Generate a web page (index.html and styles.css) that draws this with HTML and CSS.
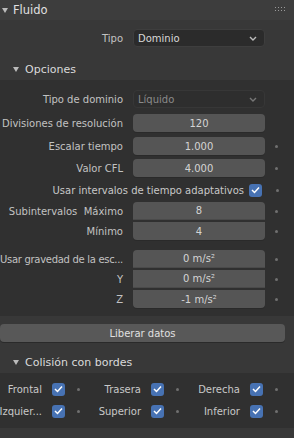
FILE: index.html
```html
<!DOCTYPE html>
<html>
<head>
<meta charset="utf-8">
<link rel="stylesheet" href="styles.css">
</head>
<body>
<div class="panel">
  <div class="phead">
    <span class="tri"></span><span class="ptitle">Fluido</span>
    <span class="grip"><i></i><i></i><i></i><i></i><i></i><i></i><i></i><i></i></span>
  </div>
  <div class="pbody">
    <div class="row r-tipo">
      <span class="lbl">Tipo</span>
      <div class="fld drop"><span>Dominio</span><svg class="chev" width="8" height="5" viewBox="0 0 8 5"><path d="M1 1 L4 4 L7 1" fill="none" stroke="#bdbdbd" stroke-width="1.4"/></svg></div>
      <span class="nodot"></span>
    </div>

    <div class="sub">
      <div class="shead"><span class="tri small"></span><span class="stitle">Opciones</span></div>
      <div class="sbody">
        <div class="row r-dom">
          <span class="lbl">Tipo de dominio</span>
          <div class="fld drop dis"><span>Líquido</span><svg class="chev" width="8" height="5" viewBox="0 0 8 5"><path d="M1 1 L4 4 L7 1" fill="none" stroke="#777" stroke-width="1.4"/></svg></div>
          <span class="nodot"></span>
        </div>
        <div class="row r-div">
          <span class="lbl">Divisiones de resolución</span>
          <div class="fld num">120</div>
          <span class="nodot"></span>
        </div>
        <div class="row r-esc">
          <span class="lbl">Escalar tiempo</span>
          <div class="fld num">1.000</div>
          <span class="dot"></span>
        </div>
        <div class="row r-cfl">
          <span class="lbl">Valor CFL</span>
          <div class="fld num">4.000</div>
          <span class="dot"></span>
        </div>
        <div class="row r-usar">
          <span class="chklbl">Usar intervalos de tiempo adaptativos</span>
          <span class="chk"><svg width="9" height="8" viewBox="0 0 9 8"><path d="M1 4 L3.5 6.5 L8 1.5" fill="none" stroke="#fff" stroke-width="1.5"/></svg></span>
          <span class="dot"></span>
        </div>
        <div class="row r-max">
          <span class="lbl">Subintervalos&nbsp; Máximo</span>
          <div class="fld num top">8</div>
          <span class="dot"></span>
        </div>
        <div class="row r-min">
          <span class="lbl">Mínimo</span>
          <div class="fld num bot">4</div>
          <span class="dot"></span>
        </div>
        <div class="row r-grav">
          <span class="lbl lbl-cut">Usar gravedad de la esc...</span>
          <div class="fld num top">0 m/s²</div>
          <span class="dot"></span>
        </div>
        <div class="row r-y">
          <span class="lbl">Y</span>
          <div class="fld num mid">0 m/s²</div>
          <span class="dot"></span>
        </div>
        <div class="row r-z">
          <span class="lbl">Z</span>
          <div class="fld num bot">-1 m/s²</div>
          <span class="dot"></span>
        </div>
      </div>
    </div>

    <div class="btn">Liberar datos</div>

    <div class="sub sub2">
      <div class="shead"><span class="tri small"></span><span class="stitle">Colisión con bordes</span></div>
      <div class="sbody sbody2">
        <div class="crow">
          <div class="cell"><span class="clbl">Frontal</span><span class="chk"><svg width="9" height="8" viewBox="0 0 9 8"><path d="M1 4 L3.5 6.5 L8 1.5" fill="none" stroke="#fff" stroke-width="1.5"/></svg></span><span class="dot"></span></div>
          <div class="cell"><span class="clbl">Trasera</span><span class="chk"><svg width="9" height="8" viewBox="0 0 9 8"><path d="M1 4 L3.5 6.5 L8 1.5" fill="none" stroke="#fff" stroke-width="1.5"/></svg></span><span class="dot"></span></div>
          <div class="cell"><span class="clbl">Derecha</span><span class="chk"><svg width="9" height="8" viewBox="0 0 9 8"><path d="M1 4 L3.5 6.5 L8 1.5" fill="none" stroke="#fff" stroke-width="1.5"/></svg></span><span class="dot"></span></div>
        </div>
        <div class="crow">
          <div class="cell"><span class="clbl">Izquier...</span><span class="chk"><svg width="9" height="8" viewBox="0 0 9 8"><path d="M1 4 L3.5 6.5 L8 1.5" fill="none" stroke="#fff" stroke-width="1.5"/></svg></span><span class="dot"></span></div>
          <div class="cell"><span class="clbl">Superior</span><span class="chk"><svg width="9" height="8" viewBox="0 0 9 8"><path d="M1 4 L3.5 6.5 L8 1.5" fill="none" stroke="#fff" stroke-width="1.5"/></svg></span><span class="dot"></span></div>
          <div class="cell"><span class="clbl">Inferior</span><span class="chk"><svg width="9" height="8" viewBox="0 0 9 8"><path d="M1 4 L3.5 6.5 L8 1.5" fill="none" stroke="#fff" stroke-width="1.5"/></svg></span><span class="dot"></span></div>
        </div>
      </div>
    </div>
  </div>
  <div class="nexthead"><span class="chk peek"><svg width="9" height="8" viewBox="0 0 9 8"><path d="M1 4 L3.5 6.5 L8 1.5" fill="none" stroke="#fff" stroke-width="1.5"/></svg></span></div>
</div>
</body>
</html>
```
FILE: styles.css
```css
* { box-sizing: border-box; }
html, body {
  margin: 0;
  padding: 0;
  background: #303030;
  width: 294px;
  height: 438px;
  overflow: hidden;
}
body {
  font-family: "DejaVu Sans", sans-serif;
  font-size: 10px;
  color: #c8c8c8;
}
.panel { display: flex; flex-direction: column; }
.phead {
  height: 20px;
  background: #3d3d3d;
  display: flex;
  align-items: center;
  position: relative;
}
.tri {
  width: 0; height: 0;
  border-left: 3.5px solid transparent;
  border-right: 3.5px solid transparent;
  border-top: 5px solid #bbbbbb;
  margin-left: 2px;
}
.tri.small { margin-left: 13px; }
.ptitle {
  margin-left: 5px;
  font-size: 11.5px;
  color: #e0e0e0;
}
.grip {
  position: absolute;
  right: 9px;
  top: 7px;
  display: grid;
  grid-template-columns: repeat(4, 1px);
  grid-auto-rows: 1px;
  gap: 2px 2px;
}
.grip i { display: block; width: 1px; height: 1px; background: #9a9a9a; }
.pbody {
  background: #383838;
  display: flex;
  flex-direction: column;
  padding-bottom: 10px;
}
.row {
  display: flex;
  align-items: center;
  height: 18px;
}
.lbl {
  width: 123px;
  text-align: right;
  white-space: nowrap;
  color: #c2c2c2;
  flex: none;
  display: flex;
  justify-content: flex-end;
}
.lbl-cut { letter-spacing: -0.3px; }
.fld {
  margin-left: 10px;
  width: 132px;
  height: 18px;
  flex: none;
  border-radius: 4px;
  display: flex;
  align-items: center;
}
.drop {
  background: #2b2b2b;
  border: 1px solid #3e3e3e;
  padding: 0 7px 0 4px;
  justify-content: space-between;
  color: #d8d8d8;
}
.drop.dis { color: #8a8a8a; background: #2e2e2e; border-color: #373737; }
.num {
  background: #555555;
  justify-content: center;
  color: #d4d4d4;
  box-shadow: 0 1px 0 #2a2a2a;
}
.num.top { border-radius: 4px 4px 0 0; box-shadow: none; border-bottom: 1px solid #4a4a4a; }
.num.mid { border-radius: 0; box-shadow: none; border-bottom: 1px solid #4a4a4a; }
.num.bot { border-radius: 0 0 4px 4px; }
.dot, .nodot {
  width: 3px; height: 3px;
  border-radius: 50%;
  margin-left: 10px;
  flex: none;
}
.dot { background: #707070; }
.r-tipo { margin-top: 9px; }
.sub { margin-top: 12px; display: flex; flex-direction: column; }
.shead {
  height: 21px;
  display: flex;
  align-items: center;
  background: #383838;
}
.stitle { margin-left: 6px; font-size: 11px; color: #dadada; }
.sbody {
  background: #303030;
  display: flex;
  flex-direction: column;
  padding: 10px 0 8px;
}
.r-div { margin-top: 6px; }
.r-esc { margin-top: 5px; }
.r-cfl { margin-top: 4px; }
.r-usar { margin-top: 4px; }
.r-max { margin-top: 3px; }
.r-min { margin-top: 2px; }
.r-grav { margin-top: 10px; }
.r-y, .r-z { margin-top: 2px; }
.chklbl {
  width: 244px;
  text-align: right;
  white-space: nowrap;
  flex: none;
}
.chk {
  width: 13px; height: 13px;
  border-radius: 3px;
  background: #4772b3;
  display: inline-flex;
  align-items: center;
  justify-content: center;
  flex: none;
  margin-left: 5px;
}
.r-usar .dot { margin-left: 14px; }
.btn {
  margin-top: 8px;
  width: 285px;
  height: 18px;
  background: #585858;
  border-radius: 4px;
  display: flex;
  align-items: center;
  justify-content: center;
  color: #e0e0e0;
  box-shadow: 0 1px 0 #2a2a2a;
}
.sub2 { margin-top: 10px; }
.sbody2 { padding: 7px 0 8px; }
.crow { display: flex; height: 18px; align-items: center; }
.crow + .crow { margin-top: 4px; }
.cell { display: flex; align-items: center; width: 99px; flex: none; }
.clbl { width: 42px; text-align: right; white-space: nowrap; flex: none; display: flex; justify-content: flex-end; }
.cell .chk { margin-left: 10px; }
.cell .dot { margin-left: 12px; }
.nexthead {
  height: 20px;
  background: #3d3d3d;
  position: relative;
}
.chk.peek { position: absolute; left: 30px; top: 3px; }
```
